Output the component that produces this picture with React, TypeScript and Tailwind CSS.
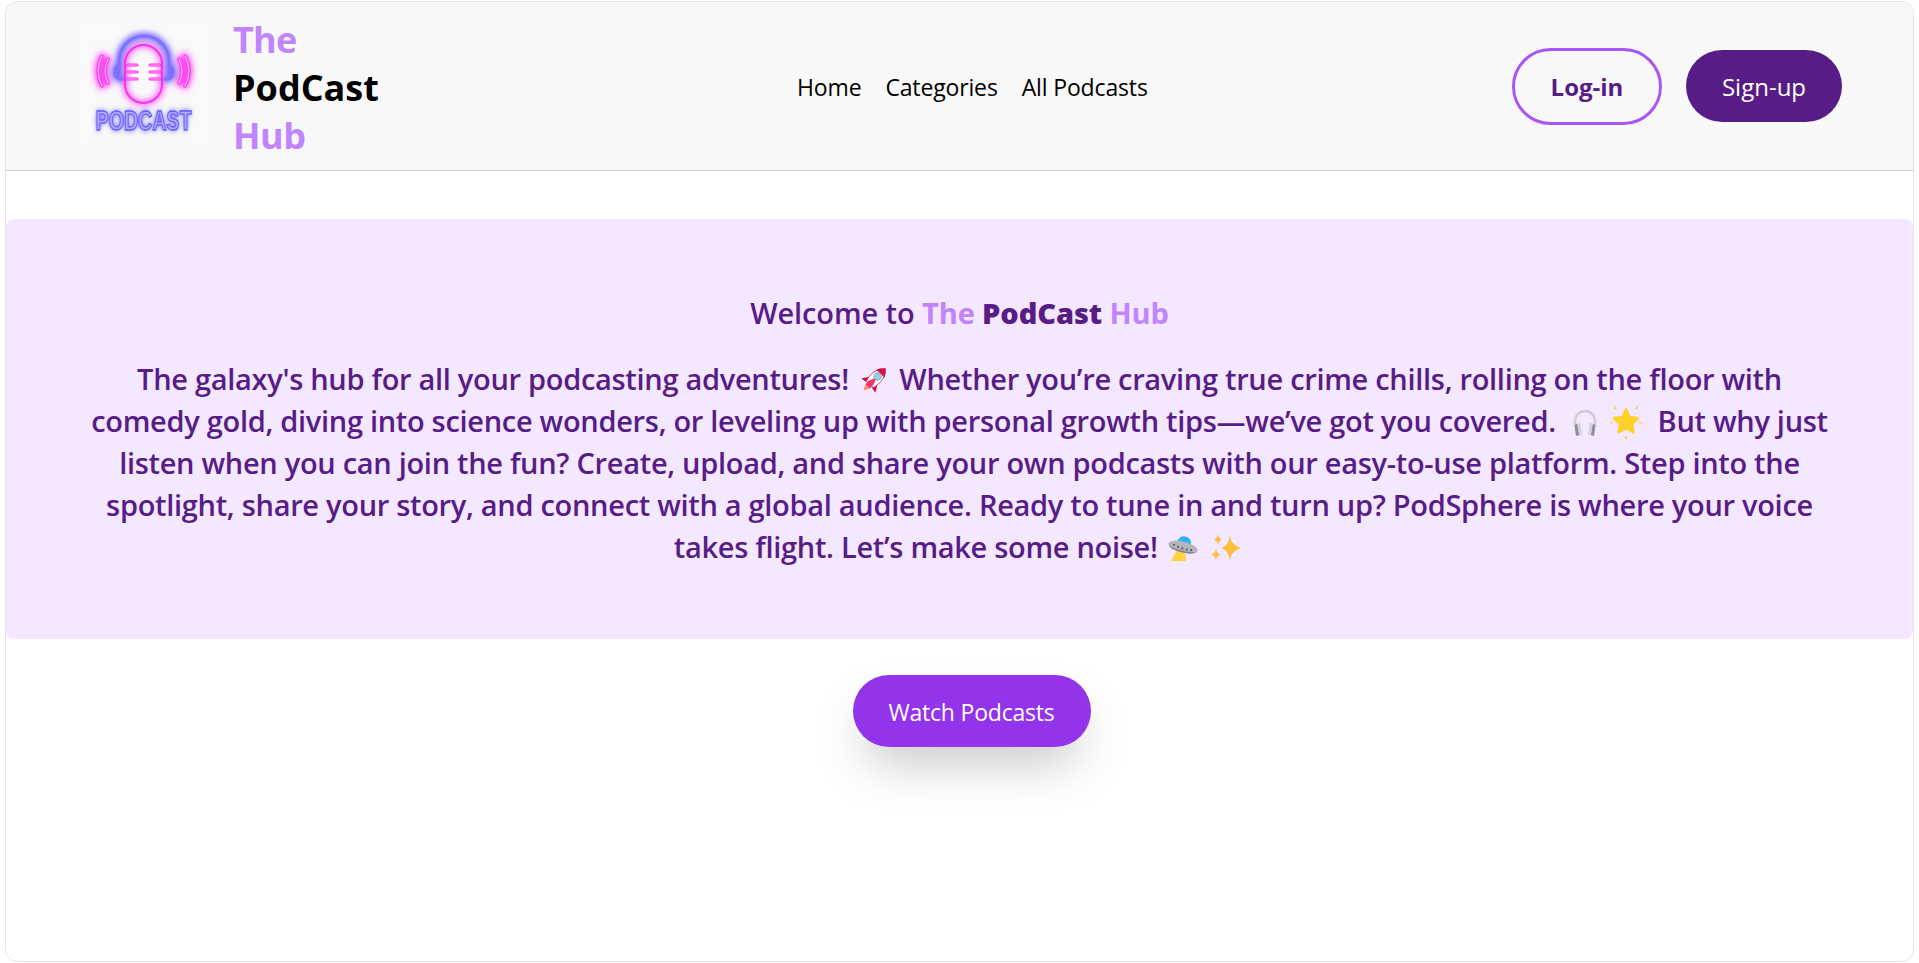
const font = { fontFamily: '"Open Sans", "Noto Sans", sans-serif' };

function Logo() {
  return (
    <svg viewBox="0 0 130 128" className="h-[128px] w-[130px] shrink-0 bg-[#f9f9f9]">
      <defs>
        <filter id="glow" x="-40%" y="-40%" width="180%" height="180%">
          <feGaussianBlur stdDeviation="3" />
        </filter>
      </defs>
      <g fill="none" strokeLinecap="round">
        <g filter="url(#glow)" stroke="#ff2df0" strokeWidth="6">
          <path d="M24 34q-8 15 0 30M30 37q-6 12 0 24M107 34q8 15 0 30M101 37q6 12 0 24" />
          <path d="M47 41.500a18.500 18.500 0 0 1 37 0v21a18.500 18.500 0 0 1-37 0z" strokeWidth="4" />
        </g>
        <path
          filter="url(#glow)"
          d="M41 50v-11a25 25 0 0 1 50 0v11M41 43a8 8 0 0 0 0 14h4M91 43a8 8 0 0 1 0 14h-4"
          stroke="#5f4dff"
          strokeWidth="6"
        />
        <path
          d="M41 50v-11a25 25 0 0 1 50 0v11M41 43a8 8 0 0 0 0 14h4M91 43a8 8 0 0 1 0 14h-4"
          stroke="#8074ff"
          strokeWidth="3"
        />
        <path d="M47 41.500a18.500 18.500 0 0 1 37 0v21a18.500 18.500 0 0 1-37 0z" stroke="#ff2fee" strokeWidth="2" />
        <path d="M49 43h10M49 50h10M49 57h10M72 43h10M72 50h10M72 57h10" stroke="#ff2fee" strokeWidth="3" />
        <path d="M49 43h10M49 50h10M49 57h10M72 43h10M72 50h10M72 57h10" stroke="#ffc0fa" strokeWidth="0.8" />
        <path d="M24 34q-8 15 0 30M30 37q-6 12 0 24M107 34q8 15 0 30M101 37q6 12 0 24" stroke="#ff3df2" strokeWidth="3.500" />
        <path d="M24 34q-8 15 0 30M30 37q-6 12 0 24M107 34q8 15 0 30M101 37q6 12 0 24" stroke="#ffd5fb" strokeWidth="1" />
      </g>
      <text transform="translate(65.500 108) scale(0.7 1)" textAnchor="middle" filter="url(#glow)" fontFamily="Liberation Sans, sans-serif" fontSize="28" fontWeight="700" fill="#4a3dff">PODCAST</text>
      <text transform="translate(65.500 108) scale(0.7 1)" textAnchor="middle" fontFamily="Liberation Sans, sans-serif" fontSize="28" fontWeight="700" fill="#b4adff" stroke="#6a5fff" strokeWidth="1.400">PODCAST</text>
    </svg>
  );
}

function Rocket() {
  return (
    <svg viewBox="0 0 30 30" role="img" aria-label="🚀" className="mx-[3px] inline-block h-[30px] w-[30px] align-[-5px]">
      <g transform="rotate(45 15 15) translate(0 -1)">
        <path d="M10 16L5 24l6-1zM20 16l5 8-6-1z" fill="#c8103f" />
        <path d="M15 0c6 5 7 13 5 22H10C8 13 9 5 15 0z" fill="#fff" stroke="#d0144a" strokeWidth="0.8" />
        <path d="M15 0c3 2.500 5 5 5.500 7h-11C10 5 12 2.500 15 0z" fill="#d0144a" />
        <circle cx="15" cy="11" r="3.500" fill="#8fd0f5" stroke="#9aa3b5" />
        <path d="M15 14c3 3 3.500 7 3 11h-6c-.500-4 0-8 3-11z" fill="#f5356a" />
        <path d="M12 25h6l-3 6z" fill="#ff8a5c" />
      </g>
    </svg>
  );
}

function Headphones() {
  return (
    <svg viewBox="0 0 30 30" role="img" aria-label="🎧" className="mr-[1px] ml-[7px] inline-block h-[30px] w-[30px] align-[-5px]">
      <path d="M5 19v-5a10 10 0 0 1 20 0v5" fill="none" stroke="#cfcdd3" strokeWidth="2.500" />
      <path d="M5 17l5-1 2 12-5 1z" fill="#d3d0d6" />
      <path d="M4.500 18l2.500-1 2 11-3 1z" fill="#8f8a96" />
      <path d="M25 17l-5-1-2 12 5 1z" fill="#d3d0d6" />
      <path d="M25.500 18l-2.500-1-2 11 3 1z" fill="#8f8a96" />
    </svg>
  );
}

function Star() {
  return (
    <svg viewBox="0 0 30 32" role="img" aria-label="🌟" className="mr-[7px] ml-[1px] inline-block h-[36px] w-[34px] align-[-8px]">
      <path
        d="M15 5l3.200 6.600 7.300 1-5.300 5.100 1.300 7.300-6.500-3.500L8.500 25l1.300-7.300-5.300-5.100 7.300-1z"
        fill="#ffd02e"
        stroke="#ffd02e"
        strokeWidth="2.500"
        strokeLinejoin="round"
      />
      <path d="M4 1l3 3-2 1zM26 1l-3 3 2 1zM0 17l3-2 .5 2zM30 17l-3-2-.5 2zM15 32l-1.500-3h3z" fill="#ffd02e" />
    </svg>
  );
}

function Ufo() {
  return (
    <svg viewBox="0 0 30 30" role="img" aria-label="🛸" className="mx-[3px] inline-block h-[30px] w-[30px] align-[-5px]">
      <path d="M9 17L3 28h15l-1-9z" fill="#ffd23f" />
      <path d="M9 9a7 7 0 0 1 14 3z" fill="#29b6f6" />
      <g transform="rotate(14 15 14)">
        <ellipse cx="15" cy="14" rx="15" ry="5.500" fill="#b5b5bb" />
        <path d="M1 15.500c3 3 25 3 28 0-1 3-7 4-14 4s-13-1-14-4z" fill="#85858e" />
        <path d="M5 14h1.500M9.500 15h1.500M14 15.500h1.500M18.500 15.500H20M23 15h1.500" stroke="#3f3a55" strokeWidth="1.800" />
      </g>
    </svg>
  );
}

function Sparkles() {
  return (
    <svg viewBox="0 0 31 30" role="img" aria-label="✨" className="mx-[3px] inline-block h-[30px] w-[31px] align-[-5px]">
      <path d="M19 2c1 7 3 10 11 13-8 3-10 6-11 13-1-7-3-10-8-13 5-3 7-6 8-13z" fill="#fdbf3b" />
      <path d="M7 1c.500 3 1.500 4 4 5.500-2.500 1.500-3.500 2.500-4 5.500-.500-3-1.500-4-4-5.500C5.500 5 6.500 4 7 1z" fill="#fdbf3b" />
      <path d="M5 16c.500 3 1.500 4 4.500 5.500C6.500 23 5.500 24 5 28c-.500-4-1.500-5-5-6.500 3.500-1.500 4.500-2.500 5-5.500z" fill="#fdbf3b" />
    </svg>
  );
}

export default function App() {
  return (
    <div className="min-h-[963px] bg-white px-[5px] pt-px" style={font}>
      <div className="h-[961px] overflow-hidden rounded-xl border border-[#e5e5e5] bg-white">
        <header className="flex h-[169px] items-center border-b border-[#d0d0d0] bg-[#f8f8f8] pl-[72px] pr-[71px]">
          <div className="flex w-[719px] items-center gap-[25px]">
            <Logo />
            <div className="pt-[4px] text-[36px] leading-[48px] font-bold text-[#c084fc]">
              <div className="tracking-[-0.8px]">The</div>
              <div className="text-black">PodCast</div>
              <div className="tracking-[-0.5px]">Hub</div>
            </div>
          </div>
          <nav className="flex gap-6 pt-[2px] text-[23px] tracking-[-0.15px] text-black">
            <a>Home</a>
            <a>Categories</a>
            <a>All Podcasts</a>
          </nav>
          <div className="ml-auto flex items-center gap-6">
            <button className="h-[77px] w-[150px] rounded-full border-[3px] border-[#a855f7] pt-[2px] text-[24px] font-bold text-[#581c87]">Log-in</button>
            <button className="h-[72px] w-[156px] rounded-full bg-[#581c87] pt-[2px] text-[24px] text-white">Sign-up</button>
          </div>
        </header>
        <section className="mt-12 flex h-[420px] flex-col items-center justify-center rounded-lg bg-[#f3e8ff] px-20 pt-[2px] text-center text-[29px] leading-[42px] font-semibold tracking-[-0.3px] text-[#581c87]">
          <h1 className="mb-6 tracking-[-0.1px]">
            Welcome to <span className="font-bold text-[#c084fc]">The</span> <span className="font-extrabold">PodCast</span> <span className="font-bold text-[#c084fc]">Hub</span>
          </h1>
          <p className="whitespace-nowrap">
            The galaxy's hub for all your podcasting adventures! <Rocket /> Whether you’re craving true crime chills, rolling on the floor with
            <br />
            comedy gold, diving into science wonders, or leveling up with personal growth tips—we’ve got you covered. <Headphones /> <Star /> But why just
            <br />
            listen when you can join the fun? Create, upload, and share your own podcasts with our easy-to-use platform. Step into the
            <br />
            spotlight, share your story, and connect with a global audience. Ready to tune in and turn up? PodSphere is where your voice
            <br />
            takes flight. Let’s make some noise! <Ufo /> <Sparkles />
          </p>
        </section>
        <div className="mt-9 ml-6 flex justify-center">
          <button className="h-[72px] w-[238px] rounded-full bg-[#9333ea] pt-[2px] text-[23px] tracking-[-0.2px] text-white shadow-2xl">Watch Podcasts</button>
        </div>
      </div>
    </div>
  );
}
